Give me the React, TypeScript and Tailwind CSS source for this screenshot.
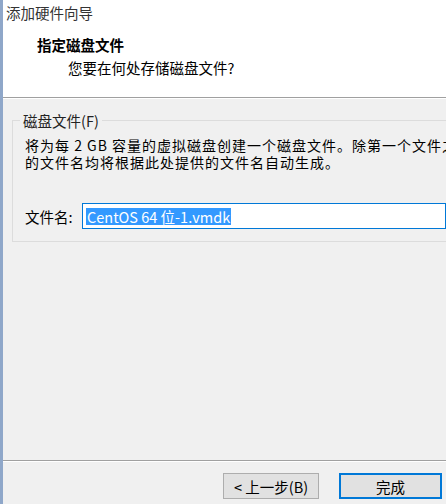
import React from "react";

const font = { fontFamily: '"Noto Sans CJK SC", "Noto Sans", sans-serif' };

export default function App() {
  return (
    <div
      className="flex h-[504px] w-[446px] overflow-hidden bg-[#f0f0f0] text-[14.5px] leading-[17px] text-black"
      style={font}
    >
      {/* window frame edge */}
      <div className="w-[3px] shrink-0 bg-[#8fa7c9]" />

      <div className="flex min-w-0 flex-1 flex-col">
        {/* header */}
        <div className="h-[98px] shrink-0 border-b border-[#a0a0a0] bg-white">
          <div className="pl-[3px] pt-[4px] text-[#333]">添加硬件向导</div>
          <div className="pl-[34px] pt-[15px] font-bold">指定磁盘文件</div>
          <div className="pl-[65px] pt-[6px]">您要在何处存储磁盘文件?</div>
        </div>
        <div className="h-px shrink-0 bg-white" />

        {/* group box */}
        <div className="relative ml-[9px] mt-[21px] h-[122px] w-[460px] shrink-0 border border-[#dcdcdc]">
          <div className="absolute -top-[9px] left-[7px] bg-[#f0f0f0] px-[3px] text-[#222]">
            磁盘文件(F)
          </div>
          <div className="whitespace-nowrap pl-[12px] pt-[16px] text-[14px] leading-[17px] tracking-[1px]">
            <div>将为每 2 GB 容量的虚拟磁盘创建一个磁盘文件。除第一个文件之</div>
            <div>的文件名均将根据此处提供的文件名自动生成。</div>
          </div>
          <div className="mt-[32px] flex items-center pl-[12px]">
            <span className="w-[57px]">文件名:</span>
            <div className="flex h-[26px] w-[364px] items-center border border-[#0078d7] bg-white pl-[3px]">
              <span className="bg-[#3399ff] px-px text-white">CentOS 64 位-1.vmdk</span>
            </div>
          </div>
        </div>

        <div className="flex-1" />

        {/* footer */}
        <div className="h-px shrink-0 bg-[#a0a0a0]" />
        <div className="h-px shrink-0 bg-white" />
        <div className="flex h-[42px] shrink-0 items-start justify-end gap-[20px] pr-[4px] pt-[11px]">
          <button className="h-[26px] w-[96px] border border-[#adadad] bg-[#e1e1e1] text-[14.5px]">
            &lt; 上一步(B)
          </button>
          <button className="h-[26px] w-[103px] border-2 border-[#0078d7] bg-[#e1e1e1] text-[14.5px]">
            完成
          </button>
        </div>
      </div>
    </div>
  );
}
